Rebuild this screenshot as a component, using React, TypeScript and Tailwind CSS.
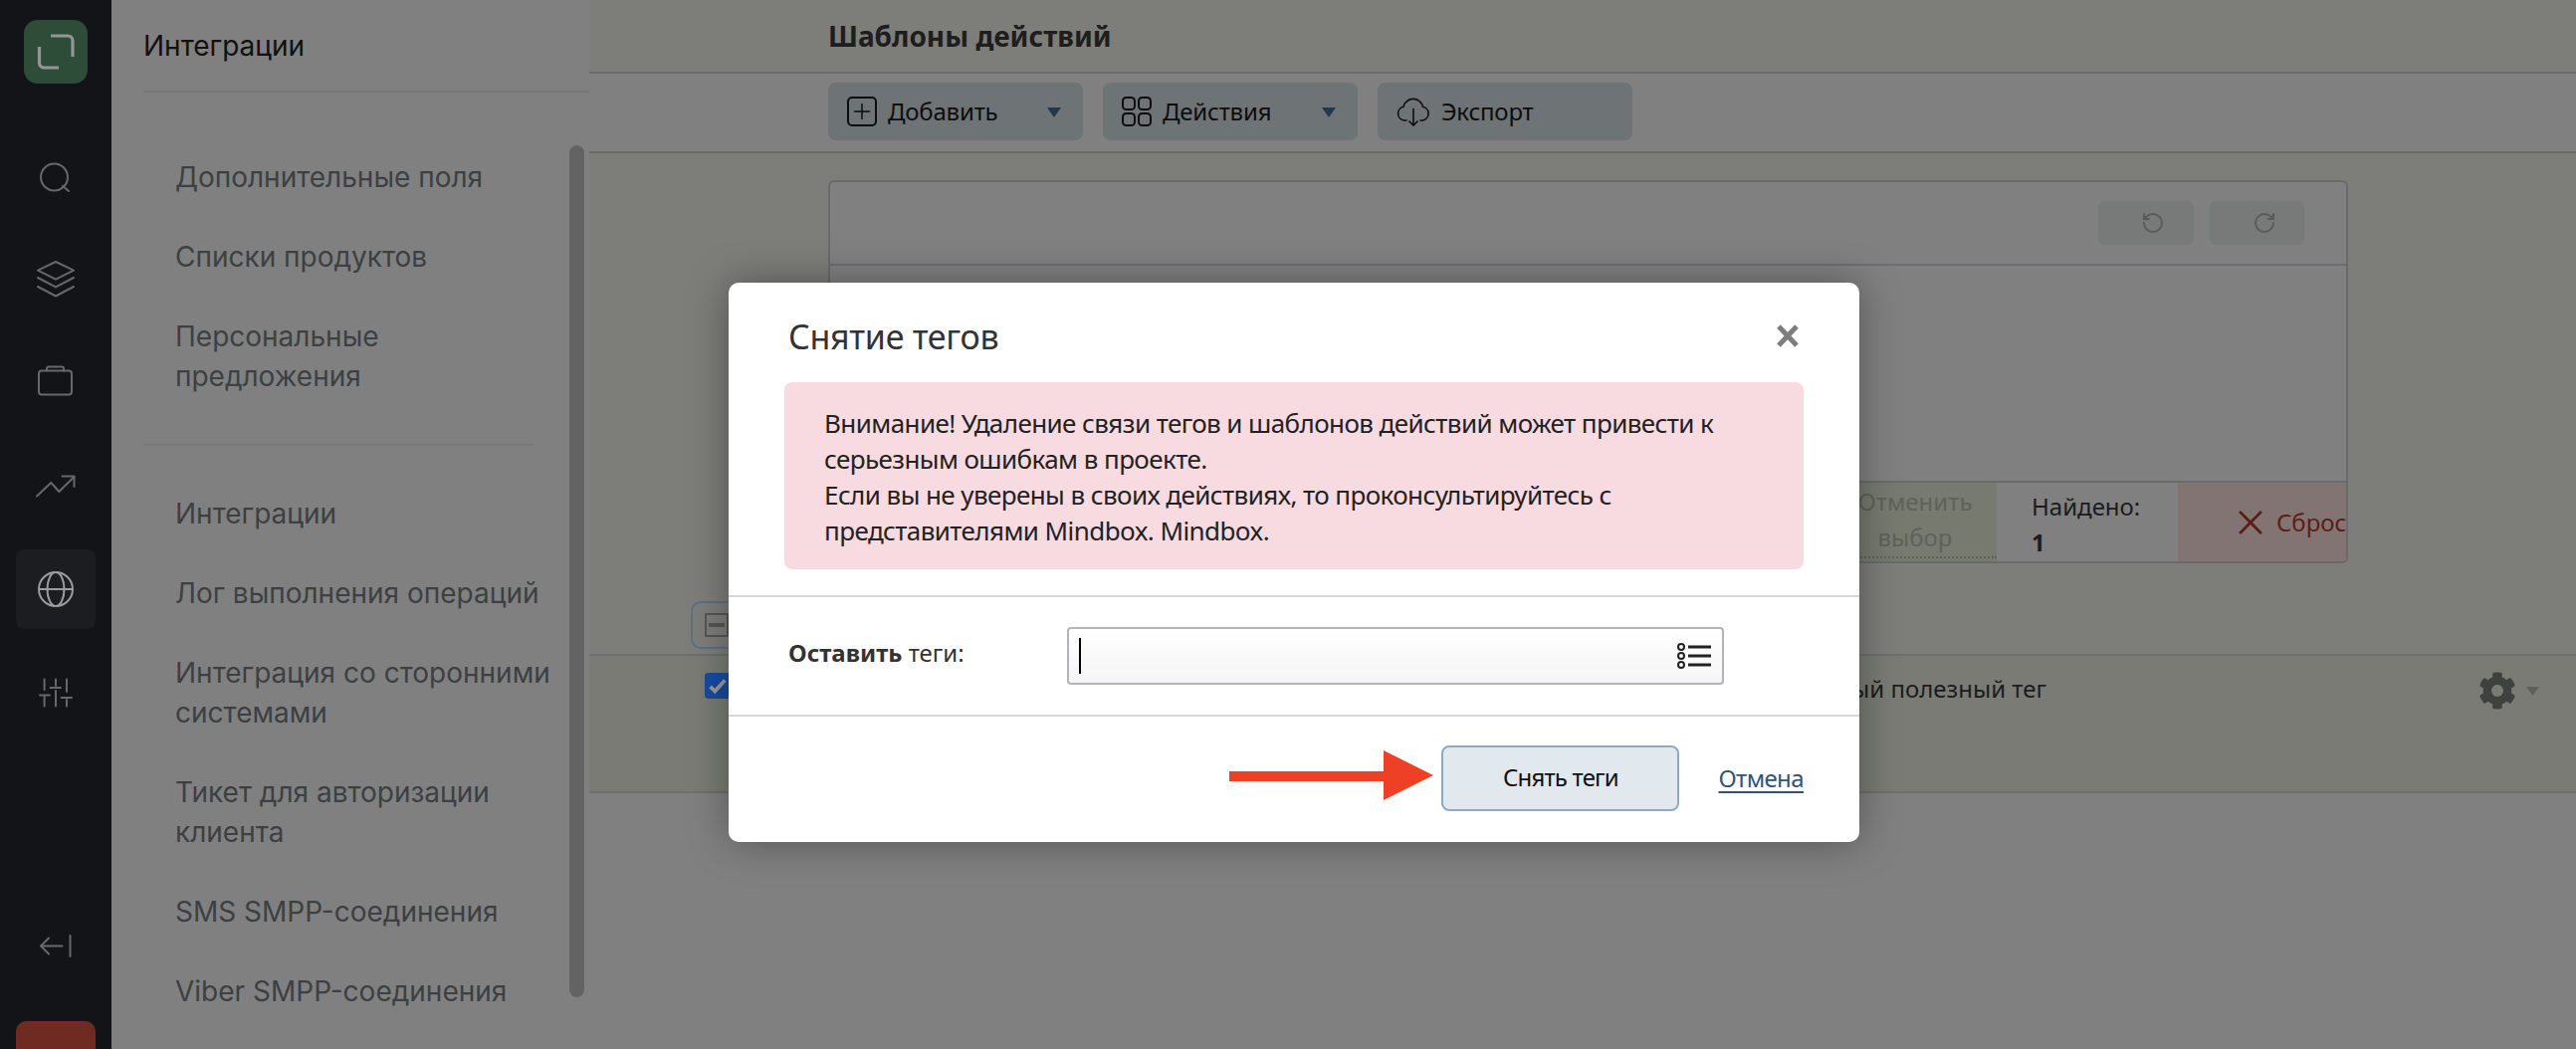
import { FaCog } from "react-icons/fa";
import { RotateCcw, RotateCw } from "lucide-react";

const MENU_TOP = ["Дополнительные поля", "Списки продуктов", "Персональные предложения"];
const MENU_BOTTOM = [
  "Интеграции",
  "Лог выполнения операций",
  "Интеграция со сторонними системами",
  "Тикет для авторизации клиента",
  "SMS SMPP-соединения",
  "Viber SMPP-соединения",
];

const NavIcon = ({ active, children }: { active?: boolean; children: React.ReactNode }) => (
  <div className={`h-[80px] w-[80px] rounded-[8px] ${active ? "bg-[#1b1d20]" : ""}`}>
    <svg
      viewBox="0 0 80 80"
      className={`h-[80px] w-[80px] ${active ? "text-[#9c9c9c]" : "text-[#66686a]"}`}
      fill="none"
      stroke="currentColor"
      strokeWidth="2"
      strokeLinecap="round"
      strokeLinejoin="round"
    >
      {children}
    </svg>
  </div>
);

const Caret = () => (
  <svg viewBox="0 0 14 10" className="h-[10px] w-[14px]">
    <path d="M0 0h14L7 10z" fill="#22384c" />
  </svg>
);

const ToolButton = ({ icon, label, caret }: { icon: React.ReactNode; label: string; caret?: boolean }) => (
  <div className="flex h-[58px] w-[256px] items-center rounded-[8px] bg-[#6e7376] pl-[19px] pr-[22px] text-[#0d0d0d]">
    {icon}
    <span className="ml-[11px] text-[24px] tracking-[-0.2px]">{label}</span>
    {caret && (
      <span className="ml-auto pt-[2px]">
        <Caret />
      </span>
    )}
  </div>
);

export default function App() {
  return (
    <div className="relative flex h-screen w-screen overflow-hidden bg-[#808080] font-['Noto_Sans',sans-serif]">
      {/* Rail */}
      <aside className="flex h-full w-[112px] shrink-0 flex-col items-center bg-[#121417]">
        <div className="mt-[20px] h-[64px] w-[64px] rounded-[14px] bg-[#2d4d38]">
          <svg viewBox="0 0 64 64" className="h-[64px] w-[64px]" fill="none" stroke="#959595" strokeWidth="3.2">
            <path d="M27 16H44a5 5 0 0 1 5 5V37" />
            <path d="M15.5 27V43a5 5 0 0 0 5 5H35" />
          </svg>
        </div>
        <nav className="mt-[52px] flex flex-col gap-[24px]">
          <NavIcon>
            <circle cx="38.5" cy="42" r="13.5" />
            <path d="M47 51l6 5" />
          </NavIcon>
          <NavIcon>
            <path d="M40 23l18 8.6-18 9-18-9z" />
            <path d="M22 39l18 9.4L58 39" />
            <path d="M22 48l18 9.5L58 48" />
          </NavIcon>
          <NavIcon>
            <rect x="23" y="28.5" width="33" height="24" rx="3" />
            <path d="M31 28.5v-2a2 2 0 0 1 2-2h13a2 2 0 0 1 2 2v2" />
          </NavIcon>
          <NavIcon>
            <path d="M21 50.5L35.3 37l8.1 9L58.5 31" />
            <path d="M46.5 30.5h12V41" />
          </NavIcon>
          <NavIcon active>
            <circle cx="40" cy="40" r="17" />
            <ellipse cx="40" cy="40" rx="8.5" ry="17" />
            <path d="M23 40h34" />
          </NavIcon>
          <NavIcon>
            <path d="M28.6 26.5V37M24 42.4h10M28.6 44v9.5" />
            <path d="M40 26.5V33M34.5 35H45M40 38v15.5" />
            <path d="M51 26.5V39M45.6 45H56M51 47v6.5" />
          </NavIcon>
        </nav>
        <div className="mt-auto">
          <NavIcon>
            <path d="M25 40.5h21.5M33 32.5l-8 8 8 8" />
            <path d="M54.5 30v21" />
          </NavIcon>
        </div>
        <div className="mt-[36px] h-[28px] w-[80px] rounded-t-[10px] bg-[#6f2a22]" />
      </aside>

      {/* Section menu */}
      <aside className="relative h-full w-[480px] shrink-0 bg-[#808080] pl-[32px] font-['Inter',sans-serif]">
        <div className="flex h-[93px] items-center border-b-2 border-[#787878] text-[28px] text-[#111]">
          Интеграции
        </div>
        <ul className="mr-[56px] mt-[65px] flex flex-col gap-[40px] border-b-2 border-[#787878] pb-[48px] pl-[32px] text-[28px] leading-[40px] text-[#3c4043]">
          {MENU_TOP.map((item) => (
            <li key={item}>{item}</li>
          ))}
        </ul>
        <ul className="mt-[48px] flex w-[418px] flex-col gap-[40px] pl-[32px] text-[28px] leading-[40px] text-[#3c4043]">
          {MENU_BOTTOM.map((item) => (
            <li key={item}>{item}</li>
          ))}
        </ul>
        <div className="absolute left-[460px] top-[146px] h-[856px] w-[15px] rounded-full bg-[#636363]" />
      </aside>

      {/* Main */}
      <main className="flex h-full min-w-0 flex-1 flex-col bg-[#7d7d7a]">
        <div className="flex h-[74px] shrink-0 items-center border-b-2 border-[#6a6a6a] pl-[240px] text-[28px] font-bold text-[#1e1e1e]">
          Шаблоны действий
        </div>
        <div className="flex h-[80px] shrink-0 items-center gap-[20px] border-b-2 border-[#6a6a6a] bg-[#808080] pb-[2px] pl-[240px]">
          <ToolButton
            label="Добавить"
            caret
            icon={
              <svg viewBox="0 0 30 30" className="h-[30px] w-[30px]" fill="none" stroke="currentColor" strokeWidth="2">
                <rect x="1" y="1" width="28" height="28" rx="4" />
                <path d="M15 7v16M7 15h16" strokeWidth="1.5" />
              </svg>
            }
          />
          <ToolButton
            label="Действия"
            caret
            icon={
              <svg viewBox="0 0 30 30" className="h-[30px] w-[30px]" fill="none" stroke="currentColor" strokeWidth="2">
                <rect x="1" y="1" width="12" height="12" rx="3.5" />
                <rect x="17" y="1" width="12" height="12" rx="3.5" />
                <rect x="1" y="17" width="12" height="12" rx="3.5" />
                <rect x="17" y="17" width="12" height="12" rx="3.5" />
              </svg>
            }
          />
          <ToolButton
            label="Экспорт"
            icon={
              <svg viewBox="0 0 34 30" className="h-[30px] w-[34px]" fill="none" stroke="currentColor" strokeWidth="1.6">
                <path d="M10 24H8A7 7 0 0 1 7 10.2 10 10 0 0 1 26.5 10.2 7 7 0 0 1 26 24H24" strokeLinecap="round" />
                <path d="M17 12v17M12.5 24.5L17 29l4.5-4.5" />
              </svg>
            }
          />
        </div>

        <div className="ml-[240px] mt-[27px] flex h-[385px] w-[1527px] shrink-0 flex-col overflow-hidden rounded-[6px] border-2 border-[#6a6a6a] bg-[#808080]">
          <div className="flex h-[84px] shrink-0 items-center justify-end gap-[16px] border-b-2 border-[#6b6d70] pr-[42px]">
            <div className="flex h-[44px] w-[96px] items-center justify-center rounded-[6px] bg-[#777a78] pl-[14px] text-[#595b59]">
              <RotateCcw size={24} strokeWidth={2} />
            </div>
            <div className="flex h-[44px] w-[95px] items-center justify-center rounded-[6px] bg-[#777a78] pl-[14px] text-[#595b59]">
              <RotateCw size={24} strokeWidth={2} />
            </div>
          </div>
          <div className="flex-1" />
          <div className="flex h-[81px] shrink-0 justify-end border-t-2 border-[#6a6a6a] text-[24px] leading-[36px]">
            <div className="flex w-[164px] flex-col items-center bg-[#767a6f] pt-[1px] text-center text-[#5f625a]">
              <span>Отменить</span>
              <span className="w-[164px] border-b-2 border-dotted border-[#5f625a] pb-[1px]">выбор</span>
            </div>
            <div className="w-[182px] bg-[#808080] pl-[35px] pt-[6px] text-[#1c1c1c]">
              <div>Найдено:</div>
              <div className="font-bold">1</div>
            </div>
            <div className="flex w-[169px] items-center whitespace-nowrap bg-[#827473] pl-[61px] text-[#5d1d15]">
              <svg viewBox="0 0 22 22" className="h-[24px] w-[24px] shrink-0" fill="none" stroke="currentColor" strokeWidth="2.6">
                <path d="M1 1l20 20M21 1L1 21" />
              </svg>
              <span className="ml-[14px]">Сброс</span>
            </div>
          </div>
        </div>

        <div className="ml-[102px] mt-[38px] flex h-[48px] w-[120px] shrink-0 items-center rounded-[10px] border-2 border-[#5c7085] pl-[12px]">
          <div className="flex h-[24px] w-[24px] items-center justify-center border-2 border-[#555]">
            <div className="h-[4px] w-[16px] bg-[#555]" />
          </div>
        </div>

        <div className="mt-[5px] flex h-[140px] shrink-0 items-start border-y-2 border-[#6f706d] bg-[#797b74] text-[24px] text-[#1c1c1c]">
          <div className="ml-[116px] mt-[17px] flex h-[26px] w-[26px] items-center justify-center rounded-[4px] bg-[#1a4a9f]">
            <svg viewBox="0 0 24 24" className="h-[22px] w-[22px]" fill="none" stroke="#9b9b9b" strokeWidth="4">
              <path d="M4 13l5 5L20 6" />
            </svg>
          </div>
          <div className="mt-[15px] flex-1 text-right">Самый полезный тег</div>
          <div className="mt-[16px] flex w-[532px] items-center pl-[434px] text-[#3f413e]">
            <FaCog size={38} />
            <svg viewBox="0 0 14 10" className="ml-[10px] h-[9px] w-[13px]">
              <path d="M0 0h14L7 10z" fill="#5f5f5f" />
            </svg>
          </div>
        </div>
        <div className="flex-1 bg-[#808080]" />
      </main>

      {/* Dialog */}
      <div className="absolute left-[732px] top-[284px] flex h-[562px] w-[1136px] flex-col rounded-[10px] bg-white shadow-[0_0_40px_rgba(0,0,0,0.35)]">
        <div className="relative h-[100px] shrink-0 pl-[60px] pt-[31px] text-[34px] leading-[46px] tracking-[-0.3px] text-[#333]">
          Снятие тегов
          <svg viewBox="0 0 22 23" className="absolute right-[61px] top-[42px] h-[23px] w-[22px]" fill="none" stroke="#7d7d7d" strokeWidth="5">
            <path d="M2 2l18 19M20 2L2 21" />
          </svg>
        </div>
        <div className="mx-[56px] h-[188px] shrink-0 rounded-[8px] bg-[#f8dbe0] px-[40px] pt-[23px] text-[26px] leading-[36px] tracking-[-0.58px] text-[#222]">
          Внимание! Удаление связи тегов и шаблонов действий может привести к серьезным ошибкам в проекте.
          <br />
          Если вы не уверены в своих действиях, то проконсультируйтесь с представителями Mindbox. Mindbox.
        </div>
        <div className="mt-[26px] flex h-[122px] shrink-0 items-center border-y-2 border-[#d6d6d6] pl-[60px]">
          <div className="w-[280px] pb-[6px] text-[24px] text-[#333]">
            <b>Оставить</b> теги:
          </div>
          <div className="flex h-[58px] w-[660px] items-center justify-between rounded-[4px] border-2 border-[#b4b4b8] bg-linear-to-b from-white to-[#f5f5f5] pl-[10px] pr-[10px]">
            <div className="h-[36px] w-[2px] bg-black" />
            <svg viewBox="0 0 36 26" className="h-[26px] w-[36px]" fill="none" stroke="#222" strokeWidth="2">
              <circle cx="5" cy="4" r="3" />
              <circle cx="5" cy="13" r="3" />
              <circle cx="5" cy="22" r="3" />
              <path d="M12 4h23M12 13h23M12 22h23" strokeWidth="3" />
            </svg>
          </div>
        </div>
        <div className="relative flex flex-1 items-center justify-end pb-[2px] pr-[56px]">
          <div className="mr-[39px] flex h-[66px] w-[239px] items-center justify-center rounded-[8px] border-2 border-[#8fa9c0] bg-[#e1e8ee] pb-[2px] text-[24px] tracking-[-0.8px] text-[#111]">
            Снять теги
          </div>
          <span className="text-[24px] leading-[30px] tracking-[-0.6px] text-[#2f5577] underline underline-offset-4">Отмена</span>
          <svg viewBox="0 0 205 50" className="absolute left-[503px] top-[34px] h-[50px] w-[205px]">
            <path d="M0 21h155V0l50 25-50 25V31H0z" fill="#ee4024" />
          </svg>
        </div>
      </div>
    </div>
  );
}
